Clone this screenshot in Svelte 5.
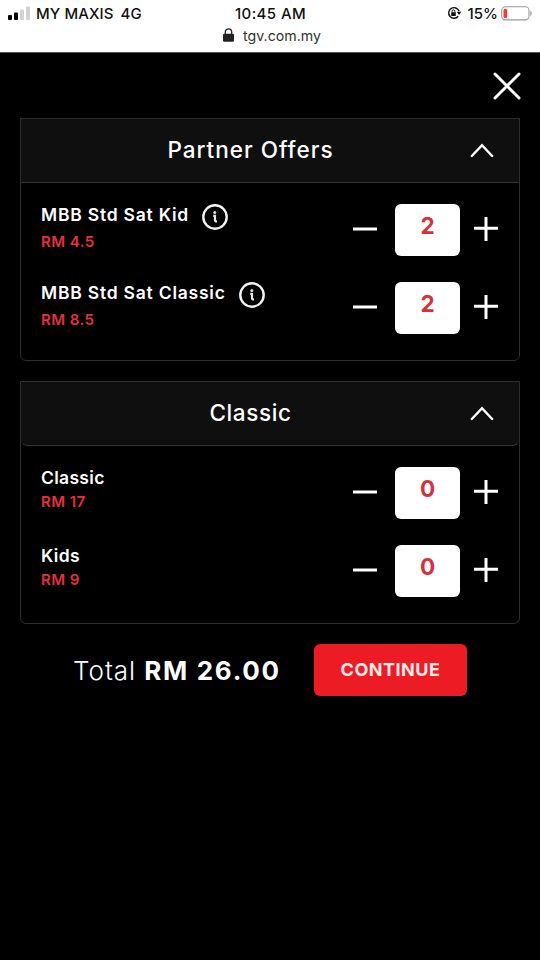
<script lang="ts">
  type Ticket = { name: string; price: string; qty: number; info: boolean };
  type Group = { title: string; kind: string; open: boolean; tickets: Ticket[] };

  let groups: Group[] = $state([
    {
      title: 'Partner Offers',
      kind: 'partner',
      open: true,
      tickets: [
        { name: 'MBB Std Sat Kid', price: '4.5', qty: 2, info: true },
        { name: 'MBB Std Sat Classic', price: '8.5', qty: 2, info: true }
      ]
    },
    {
      title: 'Classic',
      kind: 'classic',
      open: true,
      tickets: [
        { name: 'Classic', price: '17', qty: 0, info: false },
        { name: 'Kids', price: '9', qty: 0, info: false }
      ]
    }
  ]);

  let total = $derived(
    groups.flatMap((g) => g.tickets).reduce((sum, t) => sum + t.qty * Number(t.price), 0)
  );
</script>

<header class="browser">
  <div class="status">
    <div class="carrier">
      <svg width="23" height="14" viewBox="0 0 23 14">
        <rect x="0" y="9" width="4" height="5" rx="1" fill="#000" />
        <rect x="6" y="6.5" width="4" height="7.5" rx="1" fill="#000" />
        <rect x="12" y="3.5" width="4" height="10.5" rx="1" fill="#d2d2d2" />
        <rect x="18" y="0.5" width="4" height="13.5" rx="1" fill="#d2d2d2" />
      </svg>
      <span class="network">MY MAXIS</span>
      <span>4G</span>
    </div>
    <span class="time">10:45 AM</span>
    <div class="power">
      <svg width="15" height="14" viewBox="0 0 15 14">
        <path d="M11.2 10.2A5.3 5.3 0 1 1 12 5.2" fill="none" stroke="#111" stroke-width="1.4" />
        <path d="M9.8 5.7h4.6l-2.3 3.2z" fill="#111" />
        <rect x="4.2" y="6.2" width="4.6" height="3.8" rx="0.5" fill="#111" />
        <path d="M5.1 6.4V5.2a1.4 1.4 0 0 1 2.8 0v1.2" fill="none" stroke="#111" />
      </svg>
      <span class="percent">15%</span>
      <svg width="32" height="15" viewBox="0 0 32 15">
        <rect x="0.7" y="0.7" width="27.3" height="13.2" rx="3.8" fill="none" stroke="#999" stroke-width="1.1" />
        <rect x="2.5" y="2.7" width="3.7" height="9.2" rx="1.5" fill="#ee3f35" />
        <path d="M29.7 5.2q1.7 2.2 0 4.4z" fill="#999" stroke="#999" stroke-width="0.6" />
      </svg>
    </div>
  </div>
  <div class="address">
    <svg width="11" height="14" viewBox="0 0 11 14">
      <rect x="0" y="5.8" width="11" height="8" rx="1.2" fill="#222" />
      <path d="M2.3 6.5V4a3.2 3.2 0 0 1 6.4 0v2.5" fill="none" stroke="#222" stroke-width="1.3" />
    </svg>
    <span>tgv.com.my</span>
  </div>
</header>

<main>
  <div class="toolbar">
    <button class="close" aria-label="Close">
      <svg width="28" height="28" viewBox="0 0 28 28">
        <path d="M2 2l24 24M26 2L2 26" stroke="#fff" stroke-width="3" stroke-linecap="round" />
      </svg>
    </button>
  </div>

  {#each groups as group}
    <section class="group {group.kind}">
      <button class="group-head" onclick={() => (group.open = !group.open)}>
        <span class="title">{group.title}</span>
        <svg class:closed={!group.open} width="24" height="15" viewBox="0 0 24 15">
          <path d="M1.8 13L12 2.2 22.2 13" fill="none" stroke="#fff" stroke-width="2.4" stroke-linecap="round" />
        </svg>
      </button>
      {#if group.open}
        <div class="tickets">
          {#each group.tickets as ticket}
            <div class="ticket">
              <div class="details">
                <div class="name">
                  <span>{ticket.name}</span>
                  {#if ticket.info}
                    <svg width="26" height="26" viewBox="0 0 26 26">
                      <circle cx="13" cy="13" r="11.7" fill="none" stroke="#f2f2f2" stroke-width="2.4" />
                      <circle cx="12.8" cy="8.4" r="1.5" fill="#ddd" />
                      <path d="M11.2 11.8h1.8v4.6q0 1.2 2 .9" fill="none" stroke="#e8e8e8" stroke-width="2.2" />
                    </svg>
                  {/if}
                </div>
                <div class="price">RM {ticket.price}</div>
              </div>
              <button
                class="step"
                aria-label="Remove one"
                onclick={() => (ticket.qty = Math.max(0, ticket.qty - 1))}
              >
                <svg width="24" height="24" viewBox="0 0 24 24">
                  <path d="M0 12h24" stroke="#fff" stroke-width="3" />
                </svg>
              </button>
              <div class="qty">{ticket.qty}</div>
              <button class="step" aria-label="Add one" onclick={() => (ticket.qty += 1)}>
                <svg width="24" height="24" viewBox="0 0 24 24">
                  <path d="M0 11.2h24M12 0v24" stroke="#fff" stroke-width="3" />
                </svg>
              </button>
            </div>
          {/each}
        </div>
      {/if}
    </section>
  {/each}

  <footer>
    <div class="total">
      <span class="total-label">Total</span>
      <span class="amount">RM {total.toFixed(2)}</span>
    </div>
    <button class="continue">CONTINUE</button>
  </footer>
</main>

<style>
  :global(body) {
    background: #000;
  }

  :global(#app) {
    font-family: Inter, 'Liberation Sans', sans-serif;
  }

  button {
    padding: 0;
    border: 0;
    background: none;
    color: inherit;
    font-family: inherit;
    cursor: pointer;
  }

  svg {
    display: block;
    flex-shrink: 0;
  }

  .browser {
    box-sizing: border-box;
    height: 53px;
    background: #fff;
    border-bottom: 1px solid #555;
    color: #111;
  }

  .status {
    display: grid;
    grid-template-columns: 1fr auto 1fr;
    align-items: center;
    height: 26px;
    padding: 0 7px 0 8px;
    font-size: 15px;
    font-weight: 500;
  }

  .carrier,
  .power {
    display: flex;
    align-items: center;
  }

  .network {
    margin: 0 7px 0 5px;
    letter-spacing: 0.1px;
  }

  .time {
    letter-spacing: 0.4px;
  }

  .power {
    justify-content: flex-end;
  }

  .percent {
    margin: 0 3px 0 6px;
  }

  .address {
    display: flex;
    justify-content: center;
    gap: 9px;
    padding-top: 2px;
    padding-left: 4px;
    line-height: 16px;
    font-size: 14.2px;
    color: #333;
  }

  main {
    min-height: 907px;
    box-sizing: border-box;
    padding: 0 20px;
    background: #000;
    color: #fff;
  }

  .toolbar {
    display: flex;
    justify-content: flex-end;
    align-items: center;
    height: 65px;
    margin-right: -1px;
  }

  .group {
    box-sizing: border-box;
    border: 1px solid #2d2d2d;
    border-radius: 0 0 6px 6px;
    margin-bottom: 20px;
  }

  .group-head {
    display: flex;
    align-items: center;
    box-sizing: border-box;
    width: 100%;
    height: 64px;
    padding-right: 25px;
    background: #0f0f0f;
    border-bottom: 1px solid #333;
  }

  .classic .group-head {
    border-radius: 0 0 6px 6px;
  }

  .title {
    flex: 1;
    padding: 0 0 3px 10px;
    font-size: 22.5px;
    font-weight: 500;
    letter-spacing: 0.6px;
  }

  .partner .title {
    letter-spacing: 1px;
  }

  .closed {
    transform: rotate(180deg);
  }

  .tickets {
    display: flex;
    flex-direction: column;
    gap: 26px;
    padding: 21px 21px 26px 20px;
  }

  .ticket {
    display: flex;
    height: 52px;
  }

  .details {
    flex: 1;
  }

  .name {
    display: flex;
    gap: 13px;
    height: 27px;
    font-size: 17.5px;
    font-weight: 600;
    line-height: 21px;
    letter-spacing: 0.78px;
  }

  .price {
    padding-top: 1px;
    font-size: 15px;
    font-weight: 600;
    line-height: 20px;
    letter-spacing: 0.45px;
    color: #e7303a;
  }

  .classic .name {
    height: 24px;
    letter-spacing: 0.3px;
  }

  .step {
    height: 24px;
    margin-top: 13px;
  }

  .qty {
    box-sizing: border-box;
    width: 65px;
    height: 52px;
    margin: 0 14px 0 18px;
    border-radius: 6px;
    background: #fff;
    color: #d8303a;
    font-size: 22.5px;
    font-weight: 700;
    line-height: 44px;
    text-align: center;
  }

  footer {
    display: flex;
    align-items: center;
    padding-left: 53px;
  }

  .total {
    display: flex;
    gap: 8px;
    width: 241px;
    font-size: 26px;
    white-space: nowrap;
  }

  .total-label {
    font-weight: 300;
    letter-spacing: 1px;
  }

  .amount {
    font-weight: 700;
    letter-spacing: 1.7px;
  }

  .continue {
    width: 153px;
    height: 52px;
    padding-bottom: 2px;
    border-radius: 6px;
    background: #ed1c24;
    color: #ffe9e6;
    font-size: 18px;
    font-weight: 700;
    letter-spacing: 0.5px;
  }
</style>
